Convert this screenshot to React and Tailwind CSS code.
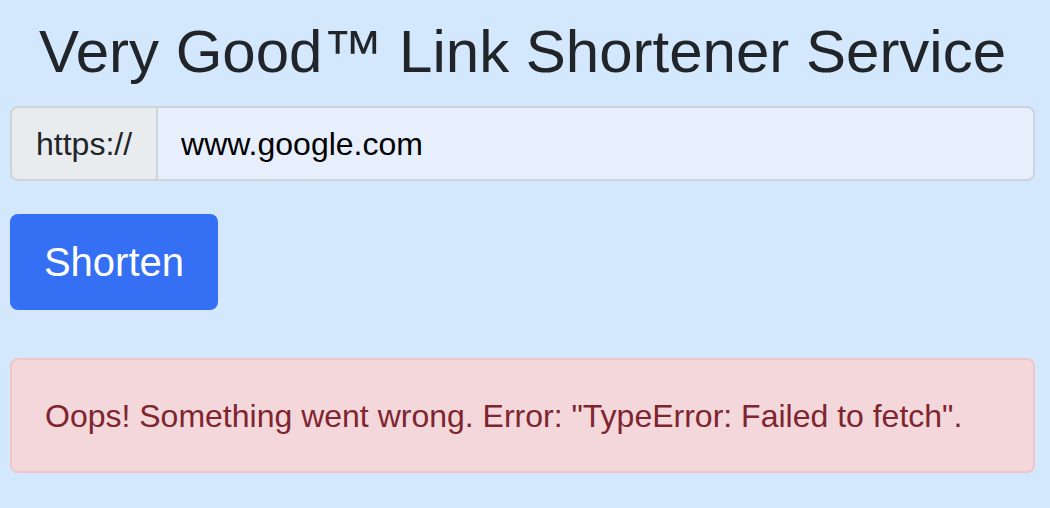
import React, { useState } from 'react';

export default function App() {
  const [url, setUrl] = useState('www.google.com');

  return (
    <div className="min-h-screen bg-[#d3e8fd] font-['Liberation_Sans',Arial,sans-serif]">
      <div className="pl-[10px] pr-[15px] pt-[16px]">
        {/* Title */}
        <h1 className="text-center text-[60px] leading-[72px] text-[#212529] mb-[18px]">
          Very Good™ Link Shortener Service
        </h1>

        {/* Input group */}
        <div className="flex h-[75px] mb-[33px]">
          <span className="flex items-center px-[24px] bg-[#e9ecef] text-[32px] text-[#212529] border-2 border-[#ced4da] rounded-l-[8px]">
            https://
          </span>
          <input
            className="flex-1 min-w-0 px-[23px] bg-[#e8effc] text-[32px] text-black border-2 border-l-0 border-[#ced4da] rounded-r-[8px] outline-none"
            value={url}
            onChange={e => setUrl(e.target.value)}
          />
        </div>

        {/* Button */}
        <button className="h-[96px] w-[208px] bg-[#346ff4] text-white text-[40px] rounded-[8px] mb-[48px]">
          Shorten
        </button>

        {/* Error */}
        <div className="h-[115px] flex items-center px-[33px] bg-[#f3d7da] border-2 border-[#f0c5c9] rounded-[8px] text-[32px] text-[#7e2530]">
          Oops! Something went wrong. Error: "TypeError: Failed to fetch".
        </div>
      </div>
    </div>
  );
}
